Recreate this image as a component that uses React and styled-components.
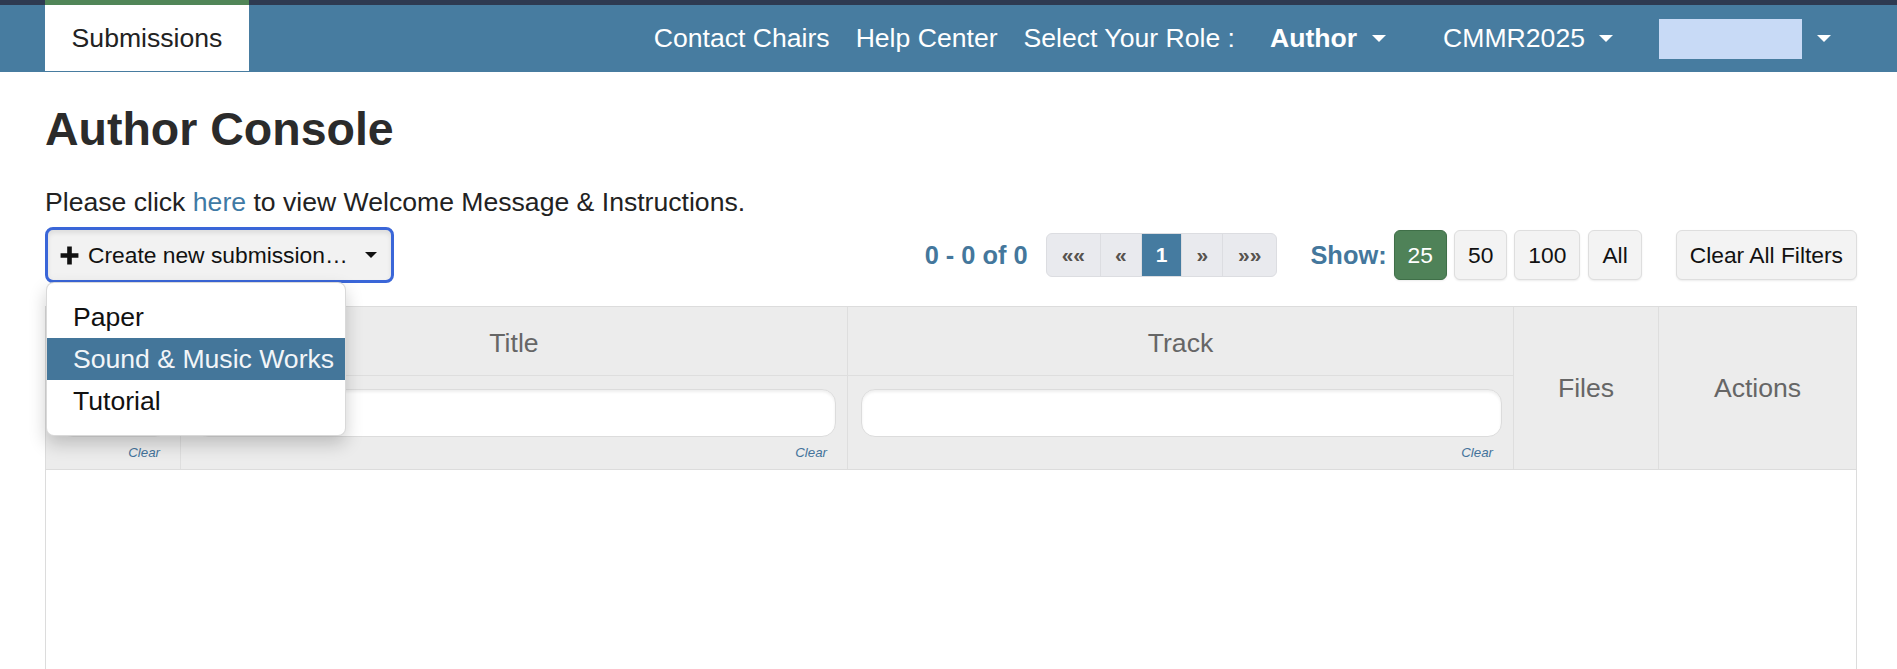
import React from 'react';
import styled, { createGlobalStyle } from 'styled-components';

const GlobalStyle = createGlobalStyle`
  html, body {
    margin: 0;
    padding: 0;
    background: #fff;
    font-family: "Liberation Sans", Arial, Helvetica, sans-serif;
    color: #333;
  }
  * { box-sizing: border-box; }
`;

const Navbar = styled.nav`
  display: flex;
  align-items: stretch;
  height: 72px;
  background: #477ca0;
  border-top: 5px solid #2e3a51;
  padding-left: 45px;
`;

const BrandTab = styled.a`
  margin-top: -5px;
  border-top: 5px solid #518658;
  height: 71px;
  width: 204px;
  background: #fff;
  display: flex;
  align-items: center;
  justify-content: center;
  font-size: 26.6px;
  color: #222;
  text-decoration: none;
`;

const NavRight = styled.div`
  margin-left: auto;
  display: flex;
  align-items: center;
  padding-right: 66px;
  color: #fff;
  font-size: 26.6px;
`;

const NavItem = styled.span`
  display: flex;
  align-items: center;
  margin-left: ${p => p.$gap || 0}px;
  font-weight: ${p => (p.$bold ? 700 : 400)};
  white-space: nowrap;
`;

const Caret = styled.span`
  display: inline-block;
  width: 0;
  height: 0;
  margin-left: ${p => p.$gap || 14}px;
  border-left: ${p => p.$size || 7}px solid transparent;
  border-right: ${p => p.$size || 7}px solid transparent;
  border-top: ${p => p.$size || 7}px solid ${p => p.$color || '#fff'};
`;

const UserBox = styled.span`
  display: inline-block;
  width: 143px;
  height: 40px;
  background: #c8daf6;
`;

const Main = styled.main`
  padding: 0 40px 0 45px;
`;

const Heading = styled.h3`
  margin: 32px 0 28px;
  font-size: 46.5px;
  line-height: 1.1;
  font-weight: 700;
  color: #2b2b2b;
`;

const Intro = styled.p`
  margin: 0;
  font-size: 26.6px;
  line-height: 38px;
  color: #222;

  a {
    color: #3f7aa5;
    text-decoration: none;
  }
`;

const Toolbar = styled.div`
  display: flex;
  align-items: center;
  margin-top: 6px;
  height: 56px;
`;

const DropWrap = styled.div`
  position: relative;
`;

const CreateButton = styled.button`
  display: flex;
  align-items: center;
  width: 349px;
  height: 56px;
  padding: 0 14px 0 11px;
  border: 3px solid #3a66d8;
  border-radius: 8px;
  background: #f2f2f2;
  box-shadow: inset 0 3px 5px rgba(0, 0, 0, 0.09);
  font-family: inherit;
  font-size: 22.8px;
  color: #111;
  cursor: pointer;

  svg { flex: none; margin-right: 8px; }
  .label { flex: 1; text-align: left; white-space: nowrap; }
`;

const Menu = styled.ul`
  position: absolute;
  top: calc(100% - 1px);
  left: 1px;
  z-index: 10;
  width: 300px;
  margin: 0;
  padding: 13px 0;
  list-style: none;
  background: #fff;
  border: 1px solid rgba(0, 0, 0, 0.15);
  border-radius: 8px;
  box-shadow: 0 8px 18px rgba(0, 0, 0, 0.2);
`;

const MenuItem = styled.li`
  height: 42px;
  line-height: 42px;
  padding-left: 26px;
  font-size: 26.6px;
  color: ${p => (p.$active ? '#f2f5f8' : '#111')};
  background: ${p => (p.$active ? '#44769a' : 'transparent')};
  white-space: nowrap;
`;

const Right = styled.div`
  margin-left: auto;
  display: flex;
  align-items: center;
`;

const BlueLabel = styled.span`
  font-size: 25.4px;
  font-weight: 700;
  color: #44779c;
  margin-left: ${p => p.$ml || 0}px;
  margin-right: ${p => p.$mr || 0}px;
  white-space: nowrap;
`;

const Pager = styled.div`
  display: flex;
  height: 44px;
  border: 1px solid #dcdde1;
  border-radius: 6px;
  overflow: hidden;
  background: #e9eaee;
`;

const PageLink = styled.span`
  display: flex;
  align-items: center;
  justify-content: center;
  padding: 0 ${p => (p.$wide ? 15 : 14)}px;
  font-size: 21px;
  font-weight: 700;
  color: ${p => (p.$active ? '#fff' : '#57534e')};
  background: ${p => (p.$active ? '#457ba0' : 'transparent')};
  & + & { border-left: 1px solid #dcdde1; }
`;

const SizeButton = styled.button`
  height: 50px;
  padding: 0 13px;
  margin-left: ${p => p.$ml ?? 7}px;
  border: 1px solid ${p => (p.$active ? '#3f6f48' : '#dedede')};
  border-radius: 6px;
  background: ${p => (p.$active ? '#4f8258' : '#f3f3f3')};
  color: ${p => (p.$active ? '#fff' : '#111')};
  box-shadow: 0 1px 2px rgba(0, 0, 0, 0.08);
  font-family: inherit;
  font-size: 22.8px;
  cursor: pointer;
`;

const Table = styled.section`
  margin-top: 23px;
`;

const TableHead = styled.div`
  display: grid;
  grid-template-columns: 134px 667px 666px 145px 1fr;
  grid-template-rows: 69px auto;
  background: #ececec;
  border: 1px solid #dcdcdc;
`;

const HeadCell = styled.div`
  display: flex;
  align-items: center;
  justify-content: center;
  grid-row: ${p => (p.$span ? 'span 2' : 'auto')};
  border-left: ${p => (p.$first ? 'none' : '1px solid #dedede')};
  border-bottom: ${p => (p.$span ? 'none' : '1px solid #dedede')};
  padding-top: ${p => (p.$span ? 0 : 4)}px;
  font-size: 26.6px;
  color: #666;
`;

const FilterCell = styled.div`
  display: flex;
  flex-direction: column;
  padding: 13px 11px 6px 13px;
  border-left: ${p => (p.$first ? 'none' : '1px solid #dedede')};
`;

const FilterInput = styled.input`
  height: 48px;
  width: 100%;
  border: 1px solid #dcdcdc;
  border-radius: 14px;
  background: #fff;
  box-shadow: inset 0 2px 3px rgba(0, 0, 0, 0.07);
  font-family: inherit;
  font-size: 22px;
  padding: 0 12px;
  outline: none;
`;

const ClearLink = styled.a`
  margin-top: 6px;
  padding-right: 9px;
  line-height: 20px;
  text-align: right;
  font-size: 13.3px;
  font-style: italic;
  color: #44739b;
`;

const TableBody = styled.div`
  height: 260px;
  border: 1px solid #dcdcdc;
  border-top: none;
  background: #fff;
`;

const PlusIcon = () => (
  <svg width="21" height="21" viewBox="0 0 20 20" aria-hidden="true">
    <path d="M10 1.5v17M1.5 10h17" stroke="#111" strokeWidth="4.4" fill="none" />
  </svg>
);

// first column's label sits under the open menu in the screenshot
const columns = [
  { key: 'id', label: '' },
  { key: 'title', label: 'Title' },
  { key: 'track', label: 'Track' },
];

export default function App() {
  return (
    <>
      <GlobalStyle />
      <Navbar>
        <BrandTab href="#">Submissions</BrandTab>
        <NavRight>
          <NavItem>Contact Chairs</NavItem>
          <NavItem $gap={26}>Help Center</NavItem>
          <NavItem $gap={26}>Select Your Role :</NavItem>
          <NavItem $gap={35} $bold>
            Author
            <Caret $gap={15} />
          </NavItem>
          <NavItem $gap={57}>
            CMMR2025
            <Caret $gap={14} />
          </NavItem>
          <NavItem $gap={46}>
            <UserBox />
            <Caret $gap={15} />
          </NavItem>
        </NavRight>
      </Navbar>

      <Main>
        <Heading>Author Console</Heading>
        <Intro>
          Please click <a href="#">here</a> to view Welcome Message &amp; Instructions.
        </Intro>

        <Toolbar>
          <DropWrap>
            <CreateButton>
              <PlusIcon />
              <span className="label">Create new submission…</span>
              <Caret $gap={0} $size={6} $color="#111" />
            </CreateButton>
            <Menu>
              <MenuItem>Paper</MenuItem>
              <MenuItem $active>Sound &amp; Music Works</MenuItem>
              <MenuItem>Tutorial</MenuItem>
            </Menu>
          </DropWrap>

          <Right>
            <BlueLabel $mr={18}>0 - 0 of 0</BlueLabel>
            <Pager>
              <PageLink $wide>««</PageLink>
              <PageLink>«</PageLink>
              <PageLink $active>1</PageLink>
              <PageLink>»</PageLink>
              <PageLink $wide>»»</PageLink>
            </Pager>
            <BlueLabel $ml={33}>Show:</BlueLabel>
            <SizeButton $active>25</SizeButton>
            <SizeButton>50</SizeButton>
            <SizeButton>100</SizeButton>
            <SizeButton $ml={8}>All</SizeButton>
            <SizeButton $ml={34}>Clear All Filters</SizeButton>
          </Right>
        </Toolbar>

        <Table>
          <TableHead>
            {columns.map((c, i) => (
              <HeadCell key={c.key} $first={i === 0}>{c.label}</HeadCell>
            ))}
            <HeadCell $span>Files</HeadCell>
            <HeadCell $span>Actions</HeadCell>
            {columns.map((c, i) => (
              <FilterCell key={c.key} $first={i === 0}>
                <FilterInput type="text" />
                <ClearLink>Clear</ClearLink>
              </FilterCell>
            ))}
          </TableHead>
          <TableBody />
        </Table>
      </Main>
    </>
  );
}
